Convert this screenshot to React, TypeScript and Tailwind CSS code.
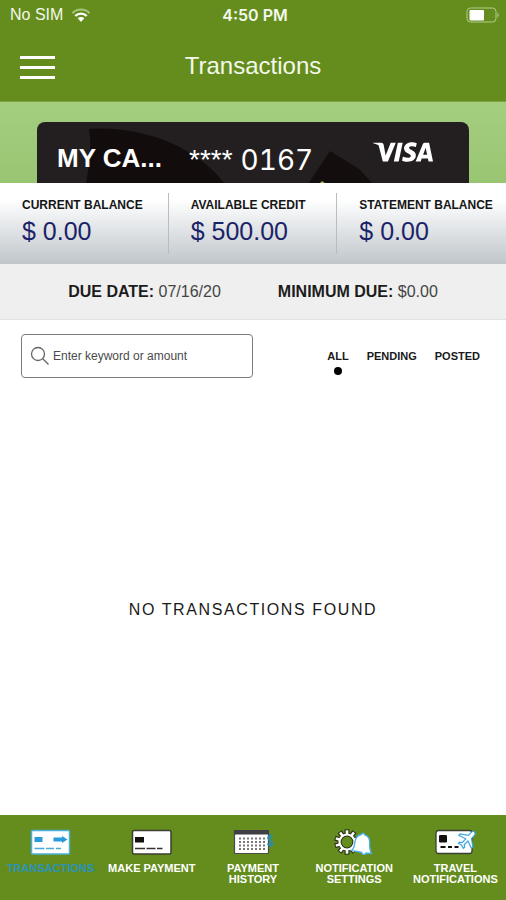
import { useState } from "react";
import type { ReactNode } from "react";
import { SiVisa } from "react-icons/si";

const balances = [
  { label: "CURRENT BALANCE", amount: "$ 0.00" },
  { label: "AVAILABLE CREDIT", amount: "$ 500.00" },
  { label: "STATEMENT BALANCE", amount: "$ 0.00" },
];

const filters = ["ALL", "PENDING", "POSTED"];

function WifiIcon() {
  return (
    <svg viewBox="0 0 20 15" className="h-[15px] w-5" aria-hidden="true">
      <path d="M1.5 5.2C6 .4 14 .4 18.500 5.200" fill="none" stroke="#a9c47c" strokeWidth="2" />
      <path d="M4.300 8C7.300 4.800 12.700 4.800 15.700 8" fill="none" stroke="#fff" strokeWidth="2.400" />
      <path d="M6.700 10.300C8.500 8.500 11.500 8.500 13.300 10.300L10 14Z" fill="#fff" />
    </svg>
  );
}

function BatteryIcon() {
  return (
    <svg viewBox="0 0 34 16" className="h-4 w-[34px]" aria-hidden="true">
      <rect x="1" y="1" width="29" height="14" rx="3.500" fill="none" stroke="#b4cb8e" />
      <rect x="3.500" y="3" width="14.500" height="10.500" rx="1" fill="#fff" />
      <path d="M31.500 5.500c1.600.7 1.600 4.300 0 5z" fill="#b4cb8e" />
    </svg>
  );
}

function TransactionsIcon() {
  return (
    <svg viewBox="0 0 42 26" className="h-[26px] w-[42px]" aria-hidden="true">
      <rect x="1.500" y="1.500" width="38" height="23.500" rx="1" fill="#fff" stroke="#49b0dc" strokeWidth="1.500" />
      <rect x="4.500" y="8" width="8" height="5" fill="#2a9bd6" />
      <path d="M23.500 8.500H32V7l5.500 3.500L32 14v-1.500h-8.500z" fill="#2a9bd6" />
      <path d="M4.500 19.500h10M16 19.500h8M26 19.500h5" stroke="#49a9d8" strokeWidth="1.500" />
    </svg>
  );
}

function PaymentIcon() {
  return (
    <svg viewBox="0 0 42 26" className="h-[26px] w-[42px]" aria-hidden="true">
      <rect x="1.500" y="1.500" width="38.500" height="23.500" rx="1.500" fill="#fff" stroke="#3c3c34" strokeWidth="1.500" />
      <rect x="4" y="8" width="9" height="5.500" fill="#111" />
      <path d="M4 19.500h10M15.500 19.500h9M26 19.500h5.500" stroke="#333" strokeWidth="1.500" />
    </svg>
  );
}

function CalendarIcon() {
  return (
    <svg viewBox="0 0 42 26" className="h-[26px] w-[42px]" aria-hidden="true">
      <rect x="2.500" y="1.500" width="34" height="23" rx="1" fill="#fff" stroke="#4a4a48" strokeWidth="1.200" />
      <path d="M2 1h35v4.500H2z" fill="#3f3f45" />
      <path
        d="M8 8.500v14M12 8.500v14M16 8.500v14M20 8.500v14M24 8.500v14M28 8.500v14M32 8.500v14"
        fill="none"
        stroke="#777"
        strokeWidth="2"
        strokeDasharray="2 1.500"
      />
      <path
        d="M40.500 8.500c-1-2-4.500-2-4.500.7 0 3 4.700 2 4.700 5 0 2.800-4 2.800-5.200.5M38 4.500v13.500"
        fill="none"
        stroke="#2a8da8"
        strokeWidth="1.600"
      />
    </svg>
  );
}

const teeth = [0, 36, 72, 108, 144, 180, 216, 252, 288, 324];

function SettingsBellIcon() {
  return (
    <svg viewBox="0 0 42 28" className="h-7 w-[42px]" aria-hidden="true">
      {teeth.map((angle) => (
        <path key={`edge-${angle}`} d="M11.500 6V.300h5V6z" fill="#2c3316" transform={`rotate(${angle} 14 13)`} />
      ))}
      <circle cx="14" cy="13" r="7.300" fill="none" stroke="#2c3316" strokeWidth="3.800" />
      {teeth.map((angle) => (
        <path key={`tooth-${angle}`} d="M12.700 6V1.300h2.600V6z" fill="#fff" transform={`rotate(${angle} 14 13)`} />
      ))}
      <circle cx="14" cy="13" r="7.500" fill="none" stroke="#fff" strokeWidth="2.200" />
      <path
        d="M18.500 21.500C21.500 19.500 21.300 16 22 12.500C22.800 8 25.500 6 28.500 5.500C29.300 3.700 31.300 3.900 31.600 5.800C35 6.800 36.800 9.500 36.600 13.500C36.500 17.500 36.500 21 38.500 24.500L33 24C32.200 26.200 29 25.800 28.600 23.400Z"
        fill="#fff"
        stroke="#49b0e8"
        strokeWidth="1.300"
      />
    </svg>
  );
}

function TravelIcon() {
  return (
    <svg viewBox="0 0 42 26" className="h-[26px] w-[42px]" aria-hidden="true">
      <rect x="2" y="1.500" width="36" height="23" rx="2.500" fill="#fff" stroke="#3a3f30" strokeWidth="1.300" />
      <rect x="5" y="6" width="8" height="7.500" rx="1.200" fill="#111" />
      <path d="M6.500 18h5M14 18h4M20.500 18h4" stroke="#111" strokeWidth="2" />
      <path
        d="M40.500 3c-1.200-1.200-2.600-.3-3.500.7l-2.500 2.600-8.500-1.500-1.200 1.400 7 3.600-3.600 3.800-2.700-.4-1 1.100 3.200 1.800 1.700 3.200 1.200-1-.3-2.700 3.700-3.500 3.400 7.200 1.500-1.200-1.400-8.700 2.500-2.600c1-1 1.700-2.600.5-3.800z"
        fill="#fff"
        stroke="#3aa5e0"
        strokeWidth="1.200"
      />
    </svg>
  );
}

const navItems: { label: string; icon: ReactNode; active?: boolean }[] = [
  { label: "TRANSACTIONS", icon: <TransactionsIcon />, active: true },
  { label: "MAKE PAYMENT", icon: <PaymentIcon /> },
  { label: "PAYMENT HISTORY", icon: <CalendarIcon /> },
  { label: "NOTIFICATION SETTINGS", icon: <SettingsBellIcon /> },
  { label: "TRAVEL NOTIFICATIONS", icon: <TravelIcon /> },
];

export default function App() {
  const [filter, setFilter] = useState("ALL");

  return (
    <div className="flex min-h-screen flex-col bg-white font-['Liberation_Sans',Arial,sans-serif]">
      <header className="border-b border-[#7ea442] bg-[#648d1d] pb-[13px] text-[#f3f8ea]">
        <div className="grid h-[30px] grid-cols-3 items-center pl-[10px] pr-[6px]">
          <div className="flex items-center gap-2 text-base">
            No SIM
            <WifiIcon />
          </div>
          <div className="text-center font-['Inter',sans-serif] text-base font-semibold">4:50 PM</div>
          <div className="flex justify-end">
            <BatteryIcon />
          </div>
        </div>
        <div className="grid grid-cols-[1fr_auto_1fr] items-center px-5 pt-[14px]">
          <button type="button" aria-label="Menu" className="flex h-11 w-[35px] flex-col justify-center gap-[7px] pt-[3px]">
            <span className="h-[3px] w-full bg-white" />
            <span className="h-[3px] w-full bg-white" />
            <span className="h-[3px] w-full bg-white" />
          </button>
          <h1 className="text-2xl">Transactions</h1>
        </div>
      </header>

      <section className="h-[81px] overflow-hidden bg-[#a0ca79] bg-linear-to-b from-[#a5ce80] to-[#99c572] px-[37px] pt-5">
        <div className="relative flex h-20 items-start overflow-hidden rounded-lg bg-[#231f20] pl-5 pr-9 text-white">
          <svg viewBox="0 0 432 62" className="absolute left-0 top-0 h-[62px] w-[432px]" aria-hidden="true">
            <path d="M52 7C92 4 152 16 188 62H49C52 42 55 24 52 7Z" fill="#120c0d" />
            <path d="M271 62L293 29L322 47L336 62Z" fill="#140d0d" />
            <path d="M283 61l2-2 3 2z" fill="#9fb04a" />
          </svg>
          <div className="relative flex h-[72px] w-full items-center">
            <span className="w-[132px] text-[26px] leading-8 font-bold">MY CA...</span>
            <span className="pt-1 text-[28px] leading-none">****</span>
            <span className="pl-2 pt-1 font-['Inter',sans-serif] text-[28px] leading-none tabular-nums">0167</span>
            <SiVisa viewBox="0 8 24 8" className="mb-3 ml-auto h-5 w-[60px]" aria-label="Visa" />
          </div>
        </div>
      </section>

      <section className="grid grid-cols-3 bg-linear-to-b from-white from-20% to-[#c0c6cb] pb-[10px] pt-[10px]">
        {balances.map((item, index) => (
          <div
            key={item.label}
            className={`h-[61px] whitespace-nowrap pl-[22px] pt-[3px] ${index < 2 ? "border-r border-[#b9bcc0]" : ""}`}
          >
            <div className="text-xs leading-[18px] font-bold text-[#151515]">{item.label}</div>
            <div className="text-[25px] leading-[34px] text-[#1b2368]">{item.amount}</div>
          </div>
        ))}
      </section>

      <section className="flex h-14 items-center justify-center gap-[57px] border-b border-[#e2e2e2] bg-[#efefef] text-base text-[#444]">
        <p>
          <strong className="text-[#1c1c1c]">DUE DATE:</strong> 07/16/20
        </p>
        <p>
          <strong className="text-[#1c1c1c]">MINIMUM DUE:</strong> $0.00
        </p>
      </section>

      <section className="flex items-start justify-between pl-[21px] pr-[26px] pt-[14px]">
        <label className="flex h-11 w-[232px] items-center gap-[3px] rounded border border-[#7c7c7c] pl-2">
          <svg viewBox="0 0 20 20" className="h-5 w-5 shrink-0" aria-hidden="true">
            <circle cx="8" cy="8" r="6.500" fill="none" stroke="#666" strokeWidth="1.300" />
            <path d="M12.800 12.800L18.500 18.500" stroke="#666" strokeWidth="1.300" />
          </svg>
          <input
            type="text"
            aria-label="Search transactions"
            placeholder="Enter keyword or amount"
            className="w-full min-w-0 bg-transparent text-xs text-[#444] outline-none placeholder:text-[#4a4a4a]"
          />
        </label>
        <div className="flex gap-[18px] pt-[14px]">
          {filters.map((name) => (
            <button
              key={name}
              type="button"
              aria-pressed={filter === name}
              onClick={() => setFilter(name)}
              className="flex flex-col items-center gap-[3px] text-[11px] leading-4 font-bold text-[#1a1a1a]"
            >
              {name}
              {filter === name && <span className="h-2 w-2 rounded-full bg-black" />}
            </button>
          ))}
        </div>
      </section>

      <main className="flex flex-1 items-center justify-center pt-[27px]">
        <p className="text-base tracking-widest text-[#1a1a1a]">NO TRANSACTIONS FOUND</p>
      </main>

      <nav className="grid h-[85px] grid-cols-5 bg-[#648d1d] pt-[14px]">
        {navItems.map((item) => (
          <a
            key={item.label}
            href="#"
            aria-current={item.active ? "page" : undefined}
            className={`flex flex-col items-center text-center text-[11px] leading-[11px] font-bold ${
              item.active ? "text-[#2a93b8]" : "text-white"
            }`}
          >
            <span className="flex h-[34px] items-start">{item.icon}</span>
            <span className="w-[90px]">{item.label}</span>
          </a>
        ))}
      </nav>
    </div>
  );
}
